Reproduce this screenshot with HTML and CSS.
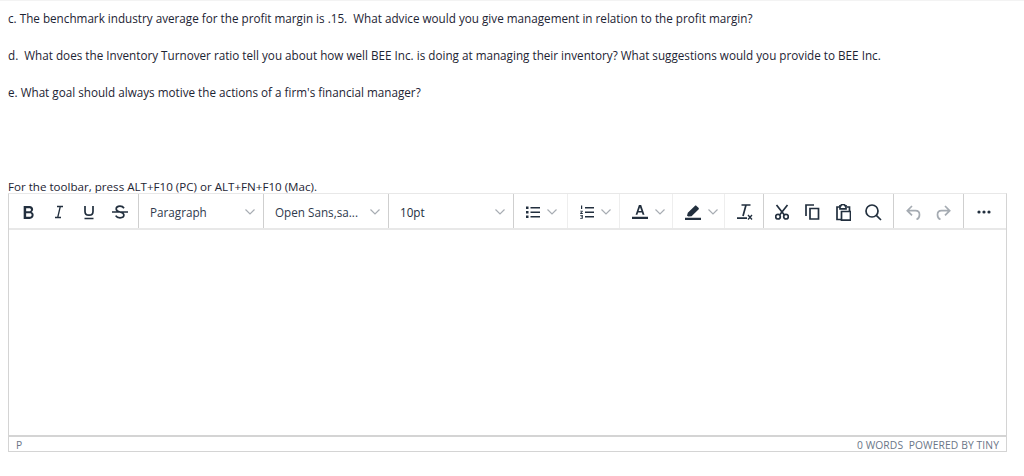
FILE: index.html
```html
<!DOCTYPE html>
<html lang="en">
<head>
<meta charset="utf-8">
<title>Question</title>
<link rel="stylesheet" href="styles.css">
</head>
<body>
<div class="questions">
  <p class="q">c. The benchmark industry average for the profit margin is .15.&nbsp; What advice would you give management in relation to the profit margin?</p>
  <p class="q">d.&nbsp; What does the Inventory Turnover ratio tell you about how well BEE Inc. is doing at managing their inventory? What suggestions would you provide to BEE Inc.</p>
  <p class="q">e. What goal should always motive the actions of a firm's financial manager?</p>
</div>
<div class="hint"><span>For the toolbar, press ALT+F10 (PC) or ALT+FN+F10 (Mac).</span></div>
<div class="editor">
  <div class="toolbar">
    <div class="group g-format">
      <span class="btn"><svg width="15" height="15" viewBox="0 0 14 14"><path class="f" d="M2.500 1h5.500c2 0 3.300 1.200 3.300 3 0 1.200-.6 2-1.500 2.500 1.200.4 2 1.400 2 2.900 0 2.200-1.500 3.600-3.700 3.600H2.500zM4.800 3v2.800h2.900c1 0 1.600-.5 1.600-1.400S8.700 3 7.700 3zM4.800 7.700V11h3.200c1.200 0 1.900-.6 1.900-1.700S9.200 7.700 8 7.700z"/></svg></span>
      <span class="btn"><svg width="14" height="14" viewBox="0 0 14 14"><path class="s thin" d="M5 1.500h6M3 12.500h6M8.300 1.500 5.700 12.500"/></svg></span>
      <span class="btn"><svg width="14" height="15" viewBox="0 0 14 15"><path class="s" d="M3 1v5.500c0 2.400 1.500 3.700 4 3.700s4-1.300 4-3.700V1M2.500 13.500h9"/></svg></span>
      <span class="btn"><svg width="16" height="15" viewBox="0 0 16 15"><path class="s" d="M12 3.200C11.300 2 9.900 1.200 8 1.200c-2.300 0-3.800 1.100-3.800 2.800 0 1.800 1.500 2.400 3.800 3s3.900 1.300 3.900 3.100c0 1.700-1.600 2.700-3.900 2.700-2 0-3.500-.8-4.300-2.200M0 7h16"/></svg></span>
    </div>
    <div class="group g-select g-para"><span class="label">Paragraph</span><svg class="chev" width="10" height="6" viewBox="0 0 10 6"><path d="M.5.5 5 5 9.500.5"/></svg></div>
    <div class="group g-select g-font"><span class="label">Open Sans,sa...</span><svg class="chev" width="10" height="6" viewBox="0 0 10 6"><path d="M.5.5 5 5 9.500.5"/></svg></div>
    <div class="group g-select g-size"><span class="label">10pt</span><svg class="chev" width="10" height="6" viewBox="0 0 10 6"><path d="M.5.5 5 5 9.500.5"/></svg></div>
    <div class="group light g-split w54">
      <svg width="14" height="14" viewBox="0 0 14 14"><path class="f" d="M0 1.500h2.500V4H0zM0 6h2.500v2.500H0zM0 10.500h2.500V13H0zM4.500 2h9.500v1.500H4.500zM4.500 6.500h9.500V8H4.500zM4.500 11h9.500v1.500H4.500z"/></svg>
      <svg class="chev" width="10" height="6" viewBox="0 0 10 6"><path d="M.5.5 5 5 9.500.5"/></svg>
    </div>
    <div class="group light g-split w52">
      <svg width="14" height="14" viewBox="0 0 14 14"><path class="f" d="M5 2h9v1.500H5zM5 6.500h9V8H5zM5 11h9v1.500H5zM1 .5h1.200v3.500H1zM.2 5.800h2.600v.8l-1.400 1.500h1.400v.8H.2v-.8l1.500-1.500H.2zM.2 10h2.600v3.800H.2V13h1.700v-.7H.8v-.7h1.100V10.800H.2z"/></svg>
      <svg class="chev" width="10" height="6" viewBox="0 0 10 6"><path d="M.5.5 5 5 9.500.5"/></svg>
    </div>
    <div class="group light g-split w53">
      <svg width="16" height="14" viewBox="0 0 16 14"><path class="f" d="M0 11.700h16V14H0zM6.900 0h2.300l3.300 9.800h-1.900l-.7-2.300H6.100l-.7 2.300H3.600zM8 2.300 6.600 6h2.800z"/></svg>
      <svg class="chev" width="10" height="6" viewBox="0 0 10 6"><path d="M.5.5 5 5 9.500.5"/></svg>
    </div>
    <div class="group light g-split w52">
      <svg width="16" height="15" viewBox="0 0 16 15"><path class="f" d="M0 12.700h16V15H0zM2 10.800l.8-3L9.800.9c.5-.5 1.200-.5 1.700 0l2 1.900c.5.500.5 1.200 0 1.700L6.500 11.300l-3 .2z"/></svg>
      <svg class="chev" width="10" height="6" viewBox="0 0 10 6"><path d="M.5.5 5 5 9.500.5"/></svg>
    </div>
    <div class="group g-clear">
      <svg width="17" height="16" viewBox="0 0 17 16"><path class="s" d="M5.500 1h9M1 14.200h10M10 1 7 12"/><path class="s thin" d="M12 11l4 4.500M16 11l-4 4.500"/></svg>
    </div>
    <div class="group g-tools">
      <span class="tool"><svg width="14" height="16" viewBox="0 0 14 16"><circle class="s" cx="3" cy="12.700" r="2.300"/><circle class="s" cx="11" cy="12.700" r="2.300"/><path class="s" d="M1.500 1l7.700 9.800M12.500 1 4.800 10.800"/></svg></span>
      <span class="tool"><svg width="15" height="16" viewBox="0 0 15 16"><path class="s" d="M1 12V1h8M5 4.500h8.500V15H5z"/></svg></span>
      <span class="tool"><svg width="15" height="17" viewBox="0 0 15 17"><path class="s" d="M3.500 3H1v12.500h4M11 3h2.500v4M4 3.500V1.800h.8C5.200.8 6 .5 7 .5s1.700.3 2.200 1.300H10v3H4zM5.500 7.500h9v8.700h-9z"/></svg></span>
      <span class="tool"><svg width="17" height="17" viewBox="0 0 17 17"><circle class="s" cx="7" cy="7" r="6"/><path class="s" d="M11.300 11.300 16 16"/></svg></span>
    </div>
    <div class="group g-hist">
      <span class="tool"><svg width="15" height="15" viewBox="0 0 15 15"><path class="muted" d="M6 1 1.300 5.700 6 10.400M1.300 5.700h8.200c2.500 0 4 1.500 4 4s-1 4-3 4.800"/></svg></span>
      <span class="tool"><svg width="15" height="15" viewBox="0 0 15 15"><path class="muted" d="M9 1l4.700 4.700L9 10.400M13.700 5.700H5.500c-2.500 0-4 1.500-4 4s1 4 3 4.800"/></svg></span>
    </div>
    <div class="group g-more"><svg width="14" height="4" viewBox="0 0 14 4"><circle class="f" cx="2" cy="2" r="1.600"/><circle class="f" cx="7" cy="2" r="1.600"/><circle class="f" cx="12" cy="2" r="1.600"/></svg></div>
  </div>
  <div class="content"></div>
  <div class="status">
    <span class="path">P</span>
    <span class="meta">0 WORDS&nbsp; POWERED BY TINY</span>
  </div>
</div>
</body>
</html>
```
FILE: styles.css
```css
* { box-sizing: border-box; }
html, body { margin: 0; padding: 0; background: #fff; }
body {
  height: 476px;
  overflow: hidden;
  font-family: "Open Sans", sans-serif;
  color: #1d2433;
  border-top: 1px solid #f3f3f3;
}
.questions { padding: 8px 8px 0; }
.q {
  margin: 0 0 19px;
  height: 18px;
  line-height: 18px;
  font-size: 11.700px;
  white-space: nowrap;
}
.hint {
  margin: 78px 0 0 8px;
  height: 14px;
  overflow: hidden;
  font-size: 11.600px;
  line-height: 15px;
  white-space: nowrap;
}
.editor {
  margin-left: 8px;
  width: 999px;
  height: 259px;
  border: 1px solid #d4d4d4;
  border-top-color: #e8e8e8;
  display: flex;
  flex-direction: column;
}
.toolbar {
  height: 36px;
  flex: none;
  display: flex;
  align-items: stretch;
  border-bottom: 2px solid #e8e8e8;
}
.group {
  display: flex;
  align-items: center;
  height: 34px;
  padding-top: 2px;
  border-right: 1px solid #cfcfcf;
}
.group.light { border-right-color: #eeeeee; }
.g-format { width: 130px; padding-left: 4px; }
.btn { width: 30.500px; display: flex; justify-content: center; }
.g-select {
  justify-content: space-between;
  padding: 2px 8px 0 11px;
  font-size: 11.700px;
  color: #2f3a4d;
  width: 125px;
}
.g-size { color: #222f3e; }
.g-split { justify-content: flex-start; padding-left: 12px; gap: 7px; }
.w54 { width: 54px; }
.w52 { width: 52px; }
.w53 { width: 53px; }
.g-clear { width: 39px; padding-left: 11px; }
.g-tools { width: 130px; padding-left: 3px; }
.tool { width: 30.500px; display: flex; justify-content: center; }
.g-hist { width: 70px; padding-left: 4px; }
.g-more { flex: 1; justify-content: center; border-right: 0; padding-right: 2px; }
.f { fill: #222f3e; }
.s { fill: none; stroke: #222f3e; stroke-width: 1.700; }
.thin { stroke-width: 1.300; }
.muted { fill: none; stroke: #a5abb2; stroke-width: 1.700; }
.chev { fill: none; stroke: #a8adb3; stroke-width: 1.200; flex: none; }
.content { flex: 1; }
.status {
  height: 16px;
  flex: none;
  border-top: 2px solid #d4d4d4;
  display: flex;
  justify-content: space-between;
  align-items: center;
  padding: 0 7px;
  font-size: 10.300px;
  color: #6b7687;
}
.path { padding-top: 1px; }
.meta { padding-top: 1px; letter-spacing: .1px; }
```
